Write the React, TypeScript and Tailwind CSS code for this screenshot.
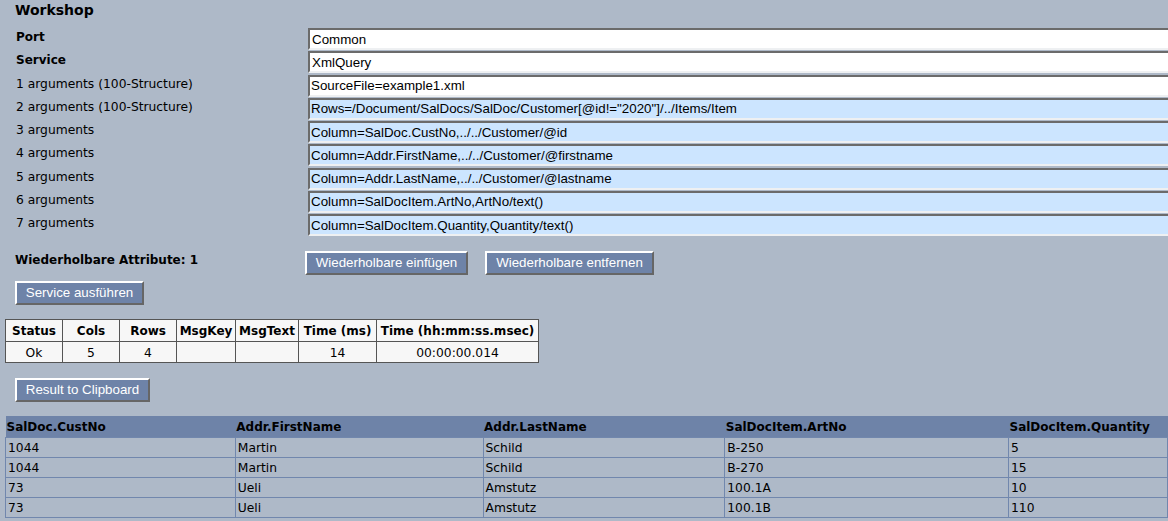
const fieldRows = [
  { label: 'Port', value: 'Common', bold: true, kind: 'plain' },
  { label: 'Service', value: 'XmlQuery', bold: true, kind: 'plain' },
  { label: '1 arguments (100-Structure)', value: 'SourceFile=example1.xml', kind: 'white' },
  { label: '2 arguments (100-Structure)', value: 'Rows=/Document/SalDocs/SalDoc/Customer[@id!="2020"]/../Items/Item', kind: 'blue' },
  { label: '3 arguments', value: 'Column=SalDoc.CustNo,../../Customer/@id', kind: 'blue' },
  { label: '4 arguments', value: 'Column=Addr.FirstName,../../Customer/@firstname', kind: 'blue' },
  { label: '5 arguments', value: 'Column=Addr.LastName,../../Customer/@lastname', kind: 'blue' },
  { label: '6 arguments', value: 'Column=SalDocItem.ArtNo,ArtNo/text()', kind: 'blue' },
  { label: '7 arguments', value: 'Column=SalDocItem.Quantity,Quantity/text()', kind: 'blue' },
]

const statusCols = [
  { name: 'Status', value: 'Ok', width: 'w-[57px]' },
  { name: 'Cols', value: '5', width: 'w-[57px]' },
  { name: 'Rows', value: '4', width: 'w-[57px]' },
  { name: 'MsgKey', value: '', width: 'w-[59px]' },
  { name: 'MsgText', value: '', width: 'w-[63px]' },
  { name: 'Time (ms)', value: '14', width: 'w-[78px]' },
  { name: 'Time (hh:mm:ss.msec)', value: '00:00:00.014', width: 'w-[162px]' },
]

const resultCols = [
  { name: 'SalDoc.CustNo', width: 'w-[230px]' },
  { name: 'Addr.FirstName', width: 'w-[248px]' },
  { name: 'Addr.LastName', width: 'w-[242px]' },
  { name: 'SalDocItem.ArtNo', width: 'w-[284px]' },
  { name: 'SalDocItem.Quantity', width: 'w-[159px]' },
]

const resultRows = [
  ['1044', 'Martin', 'Schild', 'B-250', '5'],
  ['1044', 'Martin', 'Schild', 'B-270', '15'],
  ['73', 'Ueli', 'Amstutz', '100.1A', '10'],
  ['73', 'Ueli', 'Amstutz', '100.1B', '110'],
]

function ActionButton({ label, className }: { label: string; className: string }) {
  return (
    <button
      type="button"
      className={`h-[24px] border-2 border-t-white border-l-white border-r-[#666] border-b-[#666] bg-[#6e83a8] text-[13.33px] leading-[18px] text-white font-['Liberation_Sans',Arial,sans-serif] ${className}`}
    >
      {label}
    </button>
  )
}

export default function App() {
  return (
    <div className="h-[521px] w-[1168px] overflow-hidden bg-[#aeb9c8] font-['DejaVu_Sans',Verdana,sans-serif] text-[12.3px] text-black">
      <h1 className="pl-[15px] pt-[1px] text-[14px] leading-[18px] font-bold">Workshop</h1>

      <div className="mt-[9px] flex flex-col">
        {fieldRows.map((row) => (
          <div key={row.label} className="flex h-[23.25px] items-start">
            <span className={`w-[308px] shrink-0 pl-[16px] pt-[1px] leading-[16px] ${row.bold ? 'text-[12px] font-bold' : ''}`}>
              {row.label}
            </span>
            <input
              readOnly
              value={row.value}
              className={`h-[22px] w-[900px] shrink-0 border-[#6b6b6b] border-t-2 border-l-2 border-r-white border-b-2 border-b-[#eef0f2] text-[13.33px] text-black outline-none font-['Liberation_Sans',Arial,sans-serif] ${
                row.kind === 'blue' ? 'bg-[#cce5ff]' : 'bg-white'
              } ${row.kind === 'plain' ? 'pl-[2px]' : 'pl-[1px]'}`}
            />
          </div>
        ))}
      </div>

      <div className="mt-[14px] flex items-start">
        <span className="w-[305px] shrink-0 pl-[15px] pt-[1px] text-[12px] leading-[16px] font-bold">
          Wiederholbare Attribute: 1
        </span>
        <ActionButton label="Wiederholbare einfügen" className="w-[163px]" />
        <ActionButton label="Wiederholbare entfernen" className="ml-[17px] w-[169px]" />
      </div>

      <div className="mt-[6px] pl-[15px]">
        <ActionButton label="Service ausführen" className="w-[129px]" />
      </div>

      <table className="mt-[14px] ml-[5px] table-fixed border-collapse bg-[#f7f7f7] text-[12px]">
        <thead>
          <tr className="h-[22px]">
            {statusCols.map((col) => (
              <th key={col.name} className={`${col.width} border border-[#555] p-0 text-center font-bold whitespace-nowrap`}>
                {col.name}
              </th>
            ))}
          </tr>
        </thead>
        <tbody>
          <tr className="h-[21px]">
            {statusCols.map((col) => (
              <td key={col.name} className="border border-[#555] p-0 pt-[1px] text-center text-[12.3px]">
                {col.value}
              </td>
            ))}
          </tr>
        </tbody>
      </table>

      <div className="mt-[15px] pl-[15px]">
        <ActionButton label="Result to Clipboard" className="w-[135px]" />
      </div>

      <table className="mt-[14px] ml-[5px] table-fixed border-collapse text-[12px]">
        <thead>
          <tr className="h-[21px] bg-[#6e83a8]">
            {resultCols.map((col) => (
              <th key={col.name} className={`${col.width} p-0 pt-[1px] pl-[1px] text-left font-bold`}>
                {col.name}
              </th>
            ))}
          </tr>
        </thead>
        <tbody>
          {resultRows.map((row, i) => (
            <tr key={i} className="h-[20px]">
              {row.map((cell, j) => (
                <td key={j} className="border border-[#7187ad] p-0 pt-[1px] pl-[2px] text-[12.3px] leading-[14px]">
                  {cell}
                </td>
              ))}
            </tr>
          ))}
        </tbody>
      </table>
    </div>
  )
}
